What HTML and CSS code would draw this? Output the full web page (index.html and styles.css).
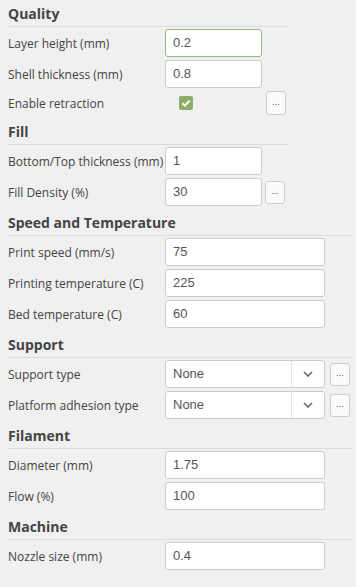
FILE: index.html
```html
<!DOCTYPE html>
<html lang="en">
<head>
    <meta charset="UTF-8">
    <meta name="viewport" content="width=device-width, initial-scale=1.0">
    <title>Print settings</title>
    <link rel="stylesheet" href="styles.css">
</head>
<body>
    <section class="group narrow">
        <h2>Quality</h2>
        <div class="rows">
            <div class="row">
                <label>Layer height (mm)</label>
                <div class="field short active">0.2</div>
            </div>
            <div class="row">
                <label>Shell thickness (mm)</label>
                <div class="field short">0.8</div>
            </div>
            <div class="row">
                <label>Enable retraction</label>
                <span class="check">
                    <svg width="10" height="10" viewBox="0 0 10 10"><path d="M1.5 5.2 L4 7.6 L8.6 2.6" fill="none" stroke="#fff" stroke-width="2"/></svg>
                </span>
                <button class="more gap-check">...</button>
            </div>
        </div>
    </section>

    <section class="group narrow">
        <h2>Fill</h2>
        <div class="rows">
            <div class="row">
                <label>Bottom/Top thickness (mm)</label>
                <div class="field short">1</div>
            </div>
            <div class="row">
                <label>Fill Density (%)</label>
                <div class="field short">30</div>
                <button class="more">...</button>
            </div>
        </div>
    </section>

    <section class="group">
        <h2>Speed and Temperature</h2>
        <div class="rows">
            <div class="row">
                <label>Print speed (mm/s)</label>
                <div class="field">75</div>
            </div>
            <div class="row">
                <label>Printing temperature (C)</label>
                <div class="field">225</div>
            </div>
            <div class="row">
                <label>Bed temperature (C)</label>
                <div class="field">60</div>
            </div>
        </div>
    </section>

    <section class="group">
        <h2>Support</h2>
        <div class="rows">
            <div class="row">
                <label>Support type</label>
                <div class="field select">
                    <span class="value">None</span>
                    <span class="arrow"><svg width="10" height="6" viewBox="0 0 10 6"><path d="M1 1 L5 5 L9 1" fill="none" stroke="#666" stroke-width="1.6"/></svg></span>
                </div>
                <button class="more wide">...</button>
            </div>
            <div class="row">
                <label>Platform adhesion type</label>
                <div class="field select">
                    <span class="value">None</span>
                    <span class="arrow"><svg width="10" height="6" viewBox="0 0 10 6"><path d="M1 1 L5 5 L9 1" fill="none" stroke="#666" stroke-width="1.6"/></svg></span>
                </div>
                <button class="more wide">...</button>
            </div>
        </div>
    </section>

    <section class="group">
        <h2>Filament</h2>
        <div class="rows">
            <div class="row">
                <label>Diameter (mm)</label>
                <div class="field">1.75</div>
            </div>
            <div class="row">
                <label>Flow (%)</label>
                <div class="field">100</div>
            </div>
        </div>
    </section>

    <section class="group">
        <h2>Machine</h2>
        <div class="rows">
            <div class="row">
                <label>Nozzle size (mm)</label>
                <div class="field">0.4</div>
            </div>
        </div>
    </section>
</body>
</html>
```

FILE: styles.css
```css
body {
    margin: 0;
    padding: 5px 3px 0 8px;
    background: #f0f0f0;
    font-family: 'Open Sans', sans-serif;
    color: #444;
}
.group {
    width: 345px;
}
.group.narrow {
    width: 280px;
}
.group + .group {
    margin-top: 8px;
}
h2 {
    margin: 0 0 2px 0;
    font-size: 14px;
    font-weight: bold;
    line-height: 18px;
    padding-bottom: 3px;
    border-bottom: 1px solid #dcdcdc;
    color: #444;
}
.rows {
    display: flex;
    flex-direction: column;
    gap: 3px;
}
.row {
    display: flex;
    align-items: center;
}
.row label {
    width: 157px;
    flex-shrink: 0;
    font-size: 12px;
    line-height: 17px;
    color: #444;
}
.field {
    box-sizing: border-box;
    width: 160px;
    height: 28px;
    padding: 0 7px;
    background: #fff;
    border: 1px solid #ccc;
    border-radius: 3px;
    font-family: 'Liberation Sans', Arial, sans-serif;
    font-size: 13px;
    line-height: 26px;
    color: #555;
}
.field.short {
    width: 97px;
}
.field.active {
    border-color: #9ab87a;
}
.select {
    display: flex;
    padding: 0;
}
.select .value {
    flex: 1;
    padding-left: 7px;
}
.select .arrow {
    width: 32px;
    border-left: 1px solid #e6e6e6;
    display: flex;
    align-items: center;
    justify-content: center;
}
.check {
    width: 14px;
    height: 14px;
    margin-left: 14px;
    border-radius: 2px;
    background: #8cb06a;
    display: flex;
    align-items: center;
    justify-content: center;
}
.more {
    box-sizing: border-box;
    width: 20px;
    height: 23px;
    margin-left: 3px;
    padding: 0 0 3px 0;
    background: #fafafa;
    border: 1px solid #ccc;
    border-radius: 3px;
    font-family: 'Liberation Sans', Arial, sans-serif;
    font-size: 9px;
    color: #555;
}
.more.gap-check {
    height: 24px;
    margin-left: 73px;
}
.more.wide {
    margin-left: 5px;
}
```
